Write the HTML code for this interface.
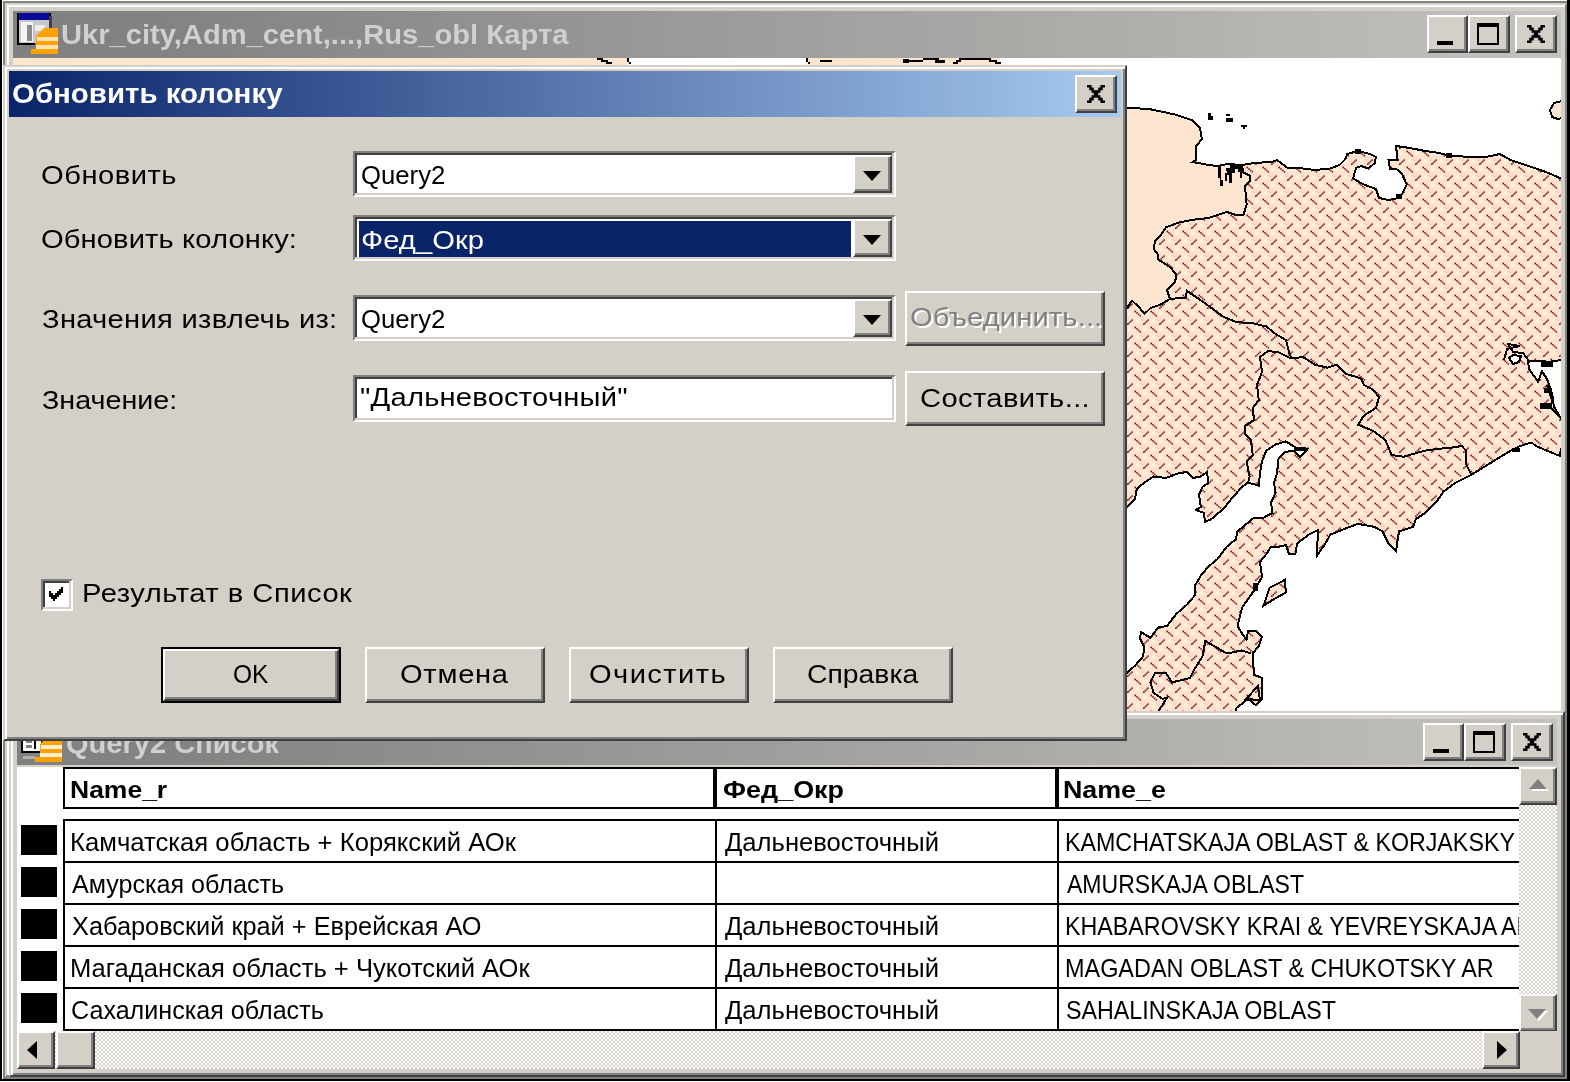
<!DOCTYPE html><html><head><meta charset="utf-8"><title>MapInfo</title><style>
*{box-sizing:border-box}
html,body{margin:0;padding:0}
body{width:1570px;height:1082px;position:relative;overflow:hidden;background:#fff;font-family:"Liberation Sans",sans-serif}
.a{position:absolute}
.t{position:absolute;white-space:pre;transform-origin:0 50%;filter:grayscale(1);font-family:"Liberation Sans",sans-serif}
.btn{position:absolute;background:#d4d0c8;border:2px solid;border-color:#fff #404040 #404040 #fff;box-shadow:inset -2px -2px 0 #808080,inset 2px 2px 0 #d4d0c8}
.sunk{position:absolute;background:#fff;border:2px solid;border-color:#808080 #fff #fff #808080;box-shadow:inset -2px -2px 0 #d4d0c8,inset 2px 2px 0 #404040}
.chk{background-color:#fff;background-image:linear-gradient(45deg,#d4d0c8 25%,transparent 25%,transparent 75%,#d4d0c8 75%),linear-gradient(45deg,#d4d0c8 25%,transparent 25%,transparent 75%,#d4d0c8 75%);background-size:4px 4px;background-position:0 0,2px 2px}
</style></head><body>
<div class="a" style="left:0;top:0;width:2px;height:1082px;background:#000"></div>
<div class="a" style="left:1567px;top:0;width:3px;height:1082px;background:#000"></div>
<div class="a" style="left:0;top:1079px;width:1570px;height:2px;background:#000"></div>
<div class="a" style="left:3px;top:1px;width:1564px;height:1078px;border:2px solid #808080;border-right-color:#808080;border-bottom-color:#808080"></div>
<div class="a" style="left:5px;top:3px;width:1562px;height:1074px;background:#d4d0c8;border:2px solid;border-color:#d4d0c8 #808080 #808080 #d4d0c8;box-shadow:inset 2px 2px 0 #fff"></div>
<div class="a" style="left:13px;top:11px;width:1548px;height:47px;background:linear-gradient(90deg,#808080 0%,#848484 12%,#c4c2be 100%)"></div>
<div class="a" style="left:17px;top:13px;width:34px;height:32px;background:#000"></div>
<div class="a" style="left:19px;top:13px;width:30px;height:7px;background:#0a0a9a"></div>
<div class="a" style="left:19px;top:20px;width:30px;height:23px;background:#c8c8cc"></div>
<div class="a" style="left:21px;top:22px;width:12px;height:20px;background:#f4f4f8"></div>
<div class="a" style="left:27px;top:25px;width:5px;height:16px;background:#8a8a8a"></div>
<div class="a" style="left:35px;top:25px;width:10px;height:6px;background:#eee"></div>
<div class="a" style="left:49px;top:16px;width:3px;height:14px;background:#404040"></div>
<div class="a" style="left:35px;top:43px;width:16px;height:4px;background:#808080"></div>
<svg class="a" style="left:31px;top:28px" width="27" height="26" viewBox="0 0 27 26"><path d="M13 0h14v26H0v-5h5V8z" fill="#ffa200"/><rect x="6" y="9" width="21" height="4" fill="#ffe2b0"/><rect x="5" y="17" width="22" height="4" fill="#ffe2b0"/></svg>
<div class="t" style="left:60.92px;top:22.14px;font-size:27px;line-height:27px;letter-spacing:0.000px;transform:scaleX(1.0789);color:#d4d0c8;font-weight:bold;">Ukr_city,Adm_cent,...,Rus_obl Карта</div>
<div class="btn" style="left:1427px;top:15px;width:41px;height:38px"></div>
<div class="btn" style="left:1468px;top:15px;width:42px;height:38px"></div>
<div class="btn" style="left:1515px;top:15px;width:42px;height:38px"></div>
<div class="a" style="left:1437px;top:41px;width:16px;height:4px;background:#000"></div>
<div class="a" style="left:1477px;top:23px;width:22px;height:22px;border:2px solid #000;border-top-width:4px"></div>
<svg class="a" style="left:1527px;top:25px" width="18" height="18" viewBox="0 0 8 7" preserveAspectRatio="none"><path d="M0 0h2v1h-2zM6 0h2v1h-2zM1 1h2v1h-2zM5 1h2v1h-2zM2 2h4v1h-4zM3 3h2v1h-2zM2 4h4v1h-4zM1 5h2v1h-2zM5 5h2v1h-2zM0 6h2v1h-2zM6 6h2v1h-2z" fill="#000"/></svg>
<svg style="position:absolute;left:0;top:0" width="1570" height="1082" viewBox="0 0 1570 1082" shape-rendering="crispEdges">
<defs>
<pattern id="ht" patternUnits="userSpaceOnUse" x="1400" y="230" width="16" height="16">
<rect width="16" height="16" fill="#fde2cf"/>
<g shape-rendering="geometricPrecision">
<circle cx="9.3" cy="11.2" r="2.8" fill="#fbecd0"/><circle cx="1.3" cy="3.2" r="2.8" fill="#fbecd0"/><circle cx="17.3" cy="3.2" r="2.8" fill="#fbecd0"/>
<circle cx="9.3" cy="11.2" r="1.4" fill="#fbf3d2"/><circle cx="1.3" cy="3.2" r="1.4" fill="#fbf3d2"/>
<circle cx="14.2" cy="9.2" r="2" fill="#fdd6cc"/><circle cx="6.2" cy="1.2" r="1.6" fill="#fdd6cc"/><circle cx="6.2" cy="17.2" r="1.6" fill="#fdd6cc"/>
</g>
<g fill="#7e1c1c" shape-rendering="geometricPrecision">
<circle cx="7.3" cy="1.5" r=".92"/><circle cx="9" cy="2.95" r=".92"/><circle cx="10.7" cy="4.4" r=".92"/><circle cx="12.4" cy="5.85" r=".92"/>
<circle cx="4.1" cy="10.1" r=".92"/><circle cx="2.7" cy="11.45" r=".92"/><circle cx="1.25" cy="12.8" r=".92"/><circle cx="-.2" cy="14.15" r=".92"/><circle cx="15.8" cy="14.15" r=".92"/>
</g></pattern>
<clipPath id="mc"><rect x="13" y="58" width="1548" height="653"/></clipPath>
</defs>
<g clip-path="url(#mc)">
<rect x="13" y="57" width="1548" height="654" fill="#fff"/>
<rect x="13" y="57" width="616" height="60" fill="#fde5d0"/>
<rect x="807" y="57" width="193" height="9" fill="#fde5d0"/>
<rect x="1000" y="57" width="30" height="9" fill="#fff"/>
<path d="M597 58h6v2h5v2h4v2h-6v-2h-5v-2h-4zM627 58h2v4h2v2h-2v-2h-2zM806 58h2v4h2v2h-2v-2h-2zM820 60h12v2h-12zM903 59h6v4h-6zM909 60h14v2h-14zM923 58h16v2h-16zM935 60h10v3h-10zM953 62h3v-2h3v-2h32v2h6v2h4v2h-6v-2h-6v-2h-28v2h-3v2h-5z" fill="#000"/>
<polygon points="1100,107 1127,107.5 1150.5,109.3 1175,114.5 1193,120.6 1200,128 1201.8,139 1196,146.5 1196,160 1193,162 1208.5,165 1217.6,166 1228,164 1242,165 1243.5,172.5 1249.6,175.5 1249.6,181.6 1245,186 1246.6,204.5 1243.5,215 1236,215 1226.8,212 1217.6,215 1208.5,218 1193,219.7 1178,222.8 1165.8,227.4 1161,235 1155,241 1153.6,248.7 1158,254.8 1158,259.4 1170,267 1176.4,274.6 1175,282.3 1167,290 1170,299 1159.7,305 1150.5,308 1144.4,314 1139.8,308 1132,300.6 1127,308 1100,308" fill="#fde5d0" stroke="#000" stroke-width="2"/>
<polygon points="1242,165 1254,163 1272.5,161.8 1277,160 1287.8,168 1303,168.5 1315,170 1330.5,168.5 1339.6,165 1345.7,158.7 1347,154 1358,151 1370,154 1376,157 1374.7,163 1368.6,168.5 1361,166 1356,168 1353,178.5 1364,184.6 1376,189 1379,198 1388.5,200 1399,198 1402,194 1406.8,184.6 1402,174 1396,168.5 1390,168.5 1388.5,160 1397.6,160 1396,146 1409.8,148 1425,151 1437,152.6 1449.5,155.7 1464.7,156.6 1486,157 1499.8,154 1510.5,160 1528.8,166 1547,172.4 1561,178.5 1580,178.5 1580,449 1561,449 1560,456 1553.7,453.5 1544.7,449.7 1535.6,445.8 1531.7,442.5 1525,444.5 1519,446.4 1512,450 1496.8,459 1486,465.8 1470.8,475 1455.6,482.6 1443.4,491.8 1437,501 1425,513 1416,519 1412.9,526.9 1399,531.4 1396,551 1388.5,543.6 1382.4,531.4 1374.7,526.9 1364,525 1358,523.8 1345.7,528.4 1330.5,534.5 1324.4,545 1316.8,555.8 1318,530 1309,534.5 1297,543.6 1295.4,554 1289,554 1286,545 1278.6,546.7 1271,546.7 1266.4,554 1260,562 1262,577 1255.8,588 1249.6,597 1242,607.7 1237.5,626 1242,633.6 1246.6,639.7 1248,630.6 1255.8,630.6 1262,636.7 1258.8,645.8 1252.7,653.5 1254,674.8 1262,677.9 1262,699 1255.8,705 1248,699 1236,708.4 1236,720 1100,720 1100,673 1126.7,673 1135,665.7 1143,656.5 1144.4,647 1139.8,638 1141.4,632 1150.5,638 1158,627.5 1167,626 1176.4,613.8 1187,604.6 1194.7,595.5 1194.7,586 1200.8,575.7 1208.5,566.5 1217.6,559 1226.8,546.7 1236,539 1237.5,531.4 1246.6,523.8 1254,517.7 1263.4,517.7 1272.5,513 1271,502.4 1275.6,493 1274,482.6 1277,473.5 1278.6,458 1284.7,452 1294,450.6 1300,456.7 1307.6,449 1295.4,447.5 1286,441.4 1275.6,444.5 1266.4,450.6 1262,461 1260,473.5 1258.8,485.7 1248,482.6 1242,487 1231,499.4 1223.7,508.5 1211.5,519 1205,522 1204,513 1196,510 1200.8,507 1199,494.8 1202.4,487 1208.5,482.6 1207,472 1200.8,476.5 1193,478 1187,472 1178,473.5 1165.8,478 1153.6,476.5 1144.4,482.6 1136.8,488.7 1135,499.4 1126.7,507 1100,507 1100,308 1127,308 1132,300.6 1139.8,308 1144.4,314 1150.5,308 1159.7,305 1170,299 1167,290 1175,282.3 1176.4,274.6 1170,267 1158,259.4 1158,254.8 1153.6,248.7 1155,241 1161,235 1165.8,227.4 1178,222.8 1193,219.7 1208.5,218 1217.6,215 1226.8,212 1236,215 1243.5,215 1246.6,204.5 1245,186 1249.6,181.6 1249.6,175.5 1243.5,172.5 1242,165" fill="url(#ht)" stroke="#000" stroke-width="2"/>
<polygon points="1580,360 1561,360 1550,361.7 1535.6,361 1528,361.7 1529,368.8 1538,381.7 1542,371.4 1547,379 1550,387 1552.4,394.7 1553.7,406 1557.6,412.8 1561,419 1580,419" fill="#fff" stroke="#000" stroke-width="2"/>
<polygon points="1263.4,606 1269.5,587.9 1284.7,580 1286,592.4 1272.5,600" fill="url(#ht)" stroke="#000" stroke-width="2"/>
<polyline points="1170,299 1185.6,297.5 1187,291 1199,299 1211.5,308 1223.7,317 1236,322 1254,323.5 1266.4,326.5 1275.6,334 1286,340 1289,352.4 1291,357" fill="none" stroke="#000" stroke-width="2"/>
<polyline points="1248,482.6 1249.6,476.5 1246.6,461 1252.7,455 1251,440 1245,433.8 1245,426 1254,420 1252.7,408 1258.8,400 1257,385 1262,372 1260,357 1268,351 1278.6,352.4 1291,358.5 1303,357 1315,364.7 1327.4,367.7 1336.6,364.7 1345.7,373.8 1361,378.4 1364,385 1373,389.6 1379,397 1376,408 1364,415.5 1358,424.7 1373,430.8 1385.4,440 1391.5,455 1403.7,456.7 1425,450.6 1437,449 1452.5,447.5 1461.7,446 1466,450.6 1466,464 1470.8,473.5" fill="none" stroke="#000" stroke-width="2"/>
<polyline points="1251,653.5 1242,650.4 1226.8,653.5 1205.4,641 1202.4,656.5 1194.7,668.7 1190,678 1171.9,682.4 1165.8,673 1155,673 1150.5,682.4 1153.6,693 1162.7,699 1167,697.7 1158,712" fill="none" stroke="#000" stroke-width="2"/>
<polyline points="1547,385 1553,403 1547,405 1559,415.5" fill="none" stroke="#000" stroke-width="2"/>
<polyline points="1504,360 1507,349 1519.6,346 1508,344 1513,352 1523,353 1529,361" fill="none" stroke="#000" stroke-width="2"/>
<polygon points="1509,358 1513,355 1521,356 1519,362 1513,364" fill="#fff" stroke="#000" stroke-width="2"/>
<polygon points="1246,699 1258,686 1260,700" fill="none" stroke="#000" stroke-width="2"/>
<path d="M1208 113h3v3h2v4h-5zM1226 114h4v2h-4zM1226 118h7v4h-7zM1241 125h6v2h-2v2h-2v-2h-2z" fill="#000"/>
<path d="M1218 166h3v14h2v6h-3v-8h-2zM1226 168h4v-3h8v4h-3v4h-3v10h-3v-8h-2v6h-2v-8h2zM1238 166h4v12h-2v-6h-2z" fill="#000"/>
<path d="M1562 101 L1554 103 L1550 110 L1552 117 L1558 119 L1562 118" fill="#fde5d0" stroke="#000" stroke-width="2"/>
<path d="M1355 149h6v5h-6zM1446 153h6v5h-6zM1396 194h6v5h-6zM1294 447h12v4h-12zM1541 362h12v5h-12zM1544 388h8v5h-8zM1540 403h12v6h-12zM1253 583h5v8h-5zM1512 448h8v4h-8z" fill="#000"/>
</g></svg>
<div class="a" style="left:9px;top:711px;width:1556px;height:366px;background:#d4d0c8;border:2px solid;border-color:#d4d0c8 #404040 #404040 #d4d0c8;box-shadow:inset 2px 2px 0 #fff,inset -2px -2px 0 #808080"></div>
<div class="a" style="left:17px;top:719px;width:1540px;height:46px;background:linear-gradient(90deg,#808080 0%,#848484 12%,#c4c2be 100%)"></div>
<div class="a" style="left:17px;top:765px;width:1540px;height:2px;background:#d4d0c8"></div>
<div class="a" style="left:21px;top:723px;width:22px;height:30px;background:#000"></div>
<div class="a" style="left:23px;top:725px;width:18px;height:26px;background:#fff"></div>
<div class="a" style="left:26px;top:741px;width:6px;height:2px;background:#808080"></div>
<div class="a" style="left:26px;top:745px;width:6px;height:3px;background:#808080"></div>
<div class="a" style="left:34px;top:739px;width:2px;height:10px;background:#000"></div>
<div class="a" style="left:23px;top:756px;width:12px;height:3px;background:#b0b0b0"></div>
<svg class="a" style="left:35px;top:736px" width="27" height="26" viewBox="0 0 27 26"><path d="M13 0h14v26H0v-5h5V8z" fill="#ffa200"/><rect x="6" y="9" width="21" height="4" fill="#fff0d0"/><rect x="5" y="17" width="22" height="4" fill="#fff0d0"/></svg>

<div class="btn" style="left:1423px;top:723px;width:41px;height:38px"></div>
<div class="btn" style="left:1464px;top:723px;width:42px;height:38px"></div>
<div class="btn" style="left:1511px;top:723px;width:42px;height:38px"></div>
<div class="a" style="left:1433px;top:749px;width:16px;height:4px;background:#000"></div>
<div class="a" style="left:1473px;top:731px;width:22px;height:22px;border:2px solid #000;border-top-width:4px"></div>
<svg class="a" style="left:1523px;top:733px" width="18" height="18" viewBox="0 0 8 7" preserveAspectRatio="none"><path d="M0 0h2v1h-2zM6 0h2v1h-2zM1 1h2v1h-2zM5 1h2v1h-2zM2 2h4v1h-4zM3 3h2v1h-2zM2 4h4v1h-4zM1 5h2v1h-2zM5 5h2v1h-2zM0 6h2v1h-2zM6 6h2v1h-2z" fill="#000"/></svg>
<div class="a" style="left:17px;top:767px;width:1503px;height:264px;background:#fff;overflow:hidden"></div>
<div class="a" style="left:63px;top:767px;width:1470px;height:42px;border:2px solid #000;border-right:0"></div>
<div class="a" style="left:713px;top:767px;width:4px;height:42px;background:#000"></div>
<div class="a" style="left:1055px;top:767px;width:4px;height:42px;background:#000"></div>
<div class="a" style="left:63px;top:819px;width:1470px;height:2px;background:#000"></div>
<div class="a" style="left:63px;top:861px;width:1470px;height:2px;background:#000"></div>
<div class="a" style="left:63px;top:903px;width:1470px;height:2px;background:#000"></div>
<div class="a" style="left:63px;top:945px;width:1470px;height:2px;background:#000"></div>
<div class="a" style="left:63px;top:987px;width:1470px;height:2px;background:#000"></div>
<div class="a" style="left:63px;top:1029px;width:1470px;height:2px;background:#000"></div>
<div class="a" style="left:63px;top:819px;width:2px;height:212px;background:#000"></div>
<div class="a" style="left:715px;top:819px;width:2px;height:212px;background:#000"></div>
<div class="a" style="left:1057px;top:819px;width:2px;height:212px;background:#000"></div>
<div class="a" style="left:21px;top:825px;width:36px;height:30px;background:#000"></div>
<div class="a" style="left:21px;top:867px;width:36px;height:30px;background:#000"></div>
<div class="a" style="left:21px;top:909px;width:36px;height:30px;background:#000"></div>
<div class="a" style="left:21px;top:951px;width:36px;height:30px;background:#000"></div>
<div class="a" style="left:21px;top:993px;width:36px;height:30px;background:#000"></div>
<div class="t" style="left:65.92px;top:731.14px;font-size:27px;line-height:27px;letter-spacing:0.000px;transform:scaleX(1.0761);color:#d4d0c8;font-weight:bold;">Query2 Список</div>
<div class="t" style="left:69.90px;top:778.08px;font-size:24px;line-height:24px;letter-spacing:0.000px;transform:scaleX(1.1036);color:#000;font-weight:bold;">Name_r</div>
<div class="t" style="left:722.70px;top:778.08px;font-size:24px;line-height:24px;letter-spacing:0.053px;transform:scaleX(1.1200);color:#000;font-weight:bold;">Фед_Окр</div>
<div class="t" style="left:1063.18px;top:778.08px;font-size:24px;line-height:24px;letter-spacing:-0.000px;transform:scaleX(1.1167);color:#000;font-weight:bold;">Name_e</div>
<div class="t" style="left:69.95px;top:829.84px;font-size:25px;line-height:25px;letter-spacing:0.000px;transform:scaleX(1.0268);color:#000;">Камчатская область + Корякский АОк</div>
<div class="t" style="left:725.00px;top:829.84px;font-size:25px;line-height:25px;letter-spacing:0.000px;transform:scaleX(1.0246);color:#000;">Дальневосточный</div>
<div class="t" style="left:1065.14px;top:829.84px;font-size:25px;line-height:25px;letter-spacing:0.000px;transform:scaleX(0.9296);color:#000;">KAMCHATSKAJA OBLAST &amp; KORJAKSKY</div>
<div class="t" style="left:72.00px;top:871.84px;font-size:25px;line-height:25px;letter-spacing:0.000px;transform:scaleX(1.0039);color:#000;">Амурская область</div>
<div class="t" style="left:1067.00px;top:871.84px;font-size:25px;line-height:25px;letter-spacing:0.000px;transform:scaleX(0.9220);color:#000;">AMURSKAJA OBLAST</div>
<div class="t" style="left:72.00px;top:913.84px;font-size:25px;line-height:25px;letter-spacing:0.000px;transform:scaleX(1.0129);color:#000;">Хабаровский край + Еврейская АО</div>
<div class="t" style="left:725.00px;top:913.84px;font-size:25px;line-height:25px;letter-spacing:0.000px;transform:scaleX(1.0246);color:#000;">Дальневосточный</div>
<div class="t" style="left:1065.14px;top:913.84px;font-size:25px;line-height:25px;letter-spacing:0.000px;transform:scaleX(0.9304);color:#000;">KHABAROVSKY KRAI &amp; YEVREYSKAJA AR</div>
<div class="t" style="left:69.95px;top:955.84px;font-size:25px;line-height:25px;letter-spacing:0.000px;transform:scaleX(1.0239);color:#000;">Магаданская область + Чукотский АОк</div>
<div class="t" style="left:725.00px;top:955.84px;font-size:25px;line-height:25px;letter-spacing:0.000px;transform:scaleX(1.0246);color:#000;">Дальневосточный</div>
<div class="t" style="left:1065.13px;top:955.84px;font-size:25px;line-height:25px;letter-spacing:0.000px;transform:scaleX(0.9370);color:#000;">MAGADAN OBLAST &amp; CHUKOTSKY AR</div>
<div class="t" style="left:71.00px;top:997.84px;font-size:25px;line-height:25px;letter-spacing:0.000px;transform:scaleX(1.0043);color:#000;">Сахалинская область</div>
<div class="t" style="left:725.00px;top:997.84px;font-size:25px;line-height:25px;letter-spacing:0.000px;transform:scaleX(1.0246);color:#000;">Дальневосточный</div>
<div class="t" style="left:1066.07px;top:997.84px;font-size:25px;line-height:25px;letter-spacing:0.000px;transform:scaleX(0.9294);color:#000;">SAHALINSKAJA OBLAST</div>
<div class="a chk" style="left:1519px;top:767px;width:38px;height:264px"></div>
<div class="btn" style="left:1519px;top:767px;width:38px;height:38px"></div>
<div class="btn" style="left:1519px;top:994px;width:38px;height:38px"></div>
<svg class="a" style="left:1529px;top:779px" width="22" height="14" viewBox="0 0 22 14"><path d="M2 12l9-10 9 10z" fill="#fff"/><path d="M0 10l9-10 9 10z" fill="#808080"/></svg>
<svg class="a" style="left:1528px;top:1009px" width="22" height="14" viewBox="0 0 22 14"><path d="M2 2l9 10 9-10z" fill="#fff"/><path d="M0 0l9 10 9-10z" fill="#808080"/></svg>
<div class="a chk" style="left:17px;top:1031px;width:1503px;height:38px"></div>
<div class="btn" style="left:17px;top:1031px;width:38px;height:38px"></div>
<div class="btn" style="left:56px;top:1031px;width:39px;height:38px"></div>
<div class="btn" style="left:1482px;top:1031px;width:38px;height:38px"></div>
<svg class="a" style="left:27px;top:1041px" width="10" height="18" viewBox="0 0 10 18"><path d="M10 0v18l-10-9z" fill="#000"/></svg>
<svg class="a" style="left:1497px;top:1041px" width="10" height="18" viewBox="0 0 10 18"><path d="M0 0v18l10-9z" fill="#000"/></svg>
<div class="a" style="left:1520px;top:1031px;width:37px;height:38px;background:#d4d0c8"></div>
<div class="a" style="left:0;top:1081px;width:1570px;height:1px;background:#fff"></div>
<div class="a" style="left:2px;top:0;width:1565px;height:1px;background:#fff"></div>
<div class="a" style="left:2px;top:0;width:1px;height:1079px;background:#fff"></div>
<div class="a" style="left:3px;top:65px;width:1124px;height:676px;background:#d4d0c8;border:2px solid;border-color:#d4d0c8 #404040 #404040 #d4d0c8;box-shadow:inset 2px 2px 0 #fff,inset -2px -2px 0 #808080"></div>
<div class="a" style="left:9px;top:71px;width:1112px;height:46px;background:linear-gradient(90deg,#0a246a 0%,#a6caf0 100%)"></div>
<div class="btn" style="left:1075px;top:75px;width:42px;height:38px"></div>
<svg class="a" style="left:1087px;top:85px" width="18" height="18" viewBox="0 0 8 7" preserveAspectRatio="none"><path d="M0 0h2v1h-2zM6 0h2v1h-2zM1 1h2v1h-2zM5 1h2v1h-2zM2 2h4v1h-4zM3 3h2v1h-2zM2 4h4v1h-4zM1 5h2v1h-2zM5 5h2v1h-2zM0 6h2v1h-2zM6 6h2v1h-2z" fill="#000"/></svg>
<div class="sunk" style="left:353px;top:151px;width:543px;height:46px"></div>
<div class="btn" style="left:853px;top:155px;width:39px;height:38px"></div>
<svg class="a" style="left:863px;top:171px" width="18" height="10" viewBox="0 0 18 10"><path d="M0 0h18l-9 10z" fill="#000"/></svg>
<div class="sunk" style="left:353px;top:215px;width:543px;height:46px"></div>
<div class="a" style="left:359px;top:221px;width:492px;height:36px;background:#0a246a"></div>
<div class="btn" style="left:853px;top:219px;width:39px;height:38px"></div>
<svg class="a" style="left:863px;top:235px" width="18" height="10" viewBox="0 0 18 10"><path d="M0 0h18l-9 10z" fill="#000"/></svg>
<div class="sunk" style="left:353px;top:295px;width:543px;height:46px"></div>
<div class="btn" style="left:853px;top:299px;width:39px;height:38px"></div>
<svg class="a" style="left:863px;top:315px" width="18" height="10" viewBox="0 0 18 10"><path d="M0 0h18l-9 10z" fill="#000"/></svg>
<div class="sunk" style="left:353px;top:375px;width:543px;height:47px"></div>
<div class="btn" style="left:905px;top:291px;width:200px;height:55px"></div>
<div class="btn" style="left:905px;top:371px;width:200px;height:55px"></div>
<div class="sunk" style="left:41px;top:579px;width:32px;height:32px"></div>
<svg class="a" style="left:49px;top:587px" width="14" height="14" viewBox="0 0 7 7" shape-rendering="crispEdges"><path d="M6 0h1v1h-1zM5 1h2v1h-2zM0 2h1v1h-1zM4 2h3v1h-3zM0 3h2v1h-2zM3 3h3v1h-3zM0 4h5v1h-5zM1 5h3v1h-3zM2 6h1v1h-1z" fill="#000"/></svg>
<div class="a" style="left:161px;top:647px;width:180px;height:56px;background:#000"></div>
<div class="btn" style="left:163px;top:649px;width:176px;height:52px"></div>
<div class="btn" style="left:365px;top:647px;width:180px;height:56px"></div>
<div class="btn" style="left:569px;top:647px;width:180px;height:56px"></div>
<div class="btn" style="left:773px;top:647px;width:180px;height:56px"></div>
<div class="t" style="left:11.91px;top:81.44px;font-size:27px;line-height:27px;letter-spacing:-0.000px;transform:scaleX(1.0903);color:#fff;font-weight:bold;">Обновить колонку</div>
<div class="t" style="left:40.58px;top:162.39px;font-size:26px;line-height:26px;letter-spacing:0.470px;transform:scaleX(1.1200);color:#000;">Обновить</div>
<div class="t" style="left:40.58px;top:226.29px;font-size:26px;line-height:26px;letter-spacing:0.114px;transform:scaleX(1.1200);color:#000;">Обновить колонку:</div>
<div class="t" style="left:42.30px;top:305.99px;font-size:26px;line-height:26px;letter-spacing:0.264px;transform:scaleX(1.1200);color:#000;">Значения извлечь из:</div>
<div class="t" style="left:42.40px;top:386.59px;font-size:26px;line-height:26px;letter-spacing:0.000px;transform:scaleX(1.1039);color:#000;">Значение:</div>
<div class="t" style="left:361.31px;top:162.39px;font-size:26px;line-height:26px;letter-spacing:0.000px;transform:scaleX(0.9892);color:#000;">Query2</div>
<div class="t" style="left:361.18px;top:227.49px;font-size:26px;line-height:26px;letter-spacing:0.070px;transform:scaleX(1.1200);color:#fff;">Фед_Окр</div>
<div class="t" style="left:361.31px;top:306.39px;font-size:26px;line-height:26px;letter-spacing:0.000px;transform:scaleX(0.9892);color:#000;">Query2</div>
<div class="t" style="left:360.08px;top:384.29px;font-size:26px;line-height:26px;letter-spacing:0.203px;transform:scaleX(1.1200);color:#000;">&quot;Дальневосточный&quot;</div>
<div class="t" style="left:911.88px;top:305.99px;font-size:26px;line-height:26px;letter-spacing:0.127px;transform:scaleX(1.1200);color:#fff;">Объединить...</div>
<div class="t" style="left:909.88px;top:303.99px;font-size:26px;line-height:26px;letter-spacing:0.127px;transform:scaleX(1.1200);color:#808080;">Объединить...</div>
<div class="t" style="left:920.38px;top:384.99px;font-size:26px;line-height:26px;letter-spacing:0.341px;transform:scaleX(1.1200);color:#000;">Составить...</div>
<div class="t" style="left:81.96px;top:580.39px;font-size:26px;line-height:26px;letter-spacing:0.466px;transform:scaleX(1.1200);color:#000;">Результат в Список</div>
<div class="t" style="left:233.46px;top:660.69px;font-size:26px;line-height:26px;letter-spacing:0.000px;transform:scaleX(0.9429);color:#000;">OK</div>
<div class="t" style="left:400.18px;top:660.69px;font-size:26px;line-height:26px;letter-spacing:0.631px;transform:scaleX(1.1200);color:#000;">Отмена</div>
<div class="t" style="left:588.88px;top:660.69px;font-size:26px;line-height:26px;letter-spacing:1.272px;transform:scaleX(1.1200);color:#000;">Очистить</div>
<div class="t" style="left:806.91px;top:660.69px;font-size:26px;line-height:26px;letter-spacing:-0.000px;transform:scaleX(1.0903);color:#000;">Справка</div>
</body></html>
